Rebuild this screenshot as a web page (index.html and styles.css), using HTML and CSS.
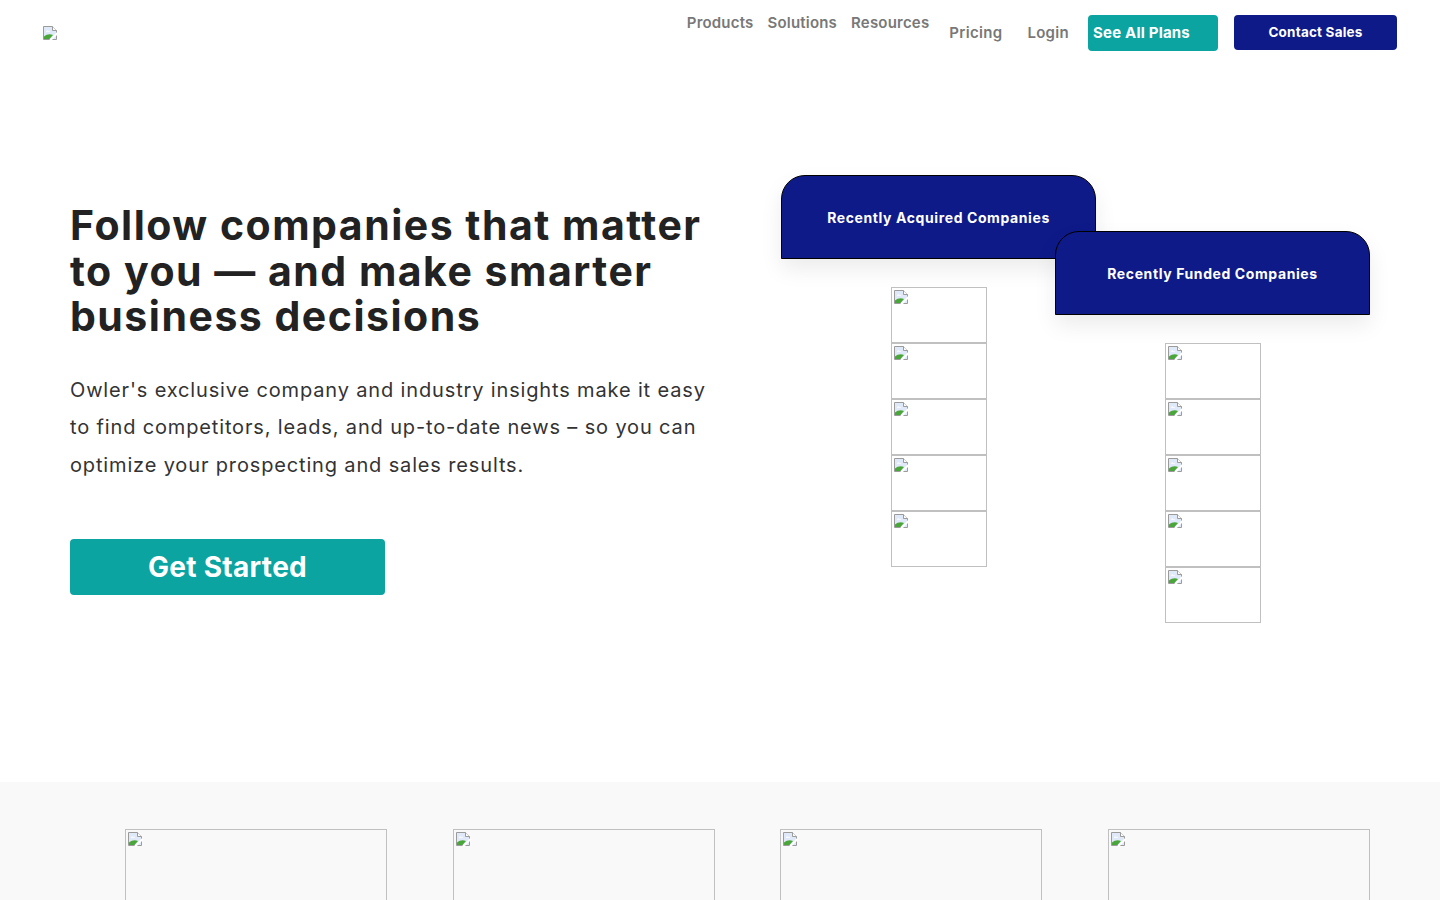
FILE: index.html
```html
<!DOCTYPE html>
<html lang="en">
<head>
    <meta charset="UTF-8">
    <meta name="viewport" content="width=device-width, initial-scale=1.0">
    <title>Owler</title>
    <link rel="stylesheet" href="styles.css">
</head>
<body>
    <!-- placeholder glyph used wherever a logo image has not loaded -->
    <svg class="defs" width="0" height="0">
      <symbol id="noimg" viewBox="0 0 16 16">
        <path d="M1.5 1.5h9l4 4v9h-13z" fill="#dfe9f7" stroke="#9b9b9b" />
        <path d="M10.5 1.5v4h4" fill="#ffffff" stroke="#9b9b9b" />
        <path d="M4 6.5c0-1 1.5-1.5 2.2-.6.6-.5 1.8-.2 1.8.8H4z" fill="#ffffff" />
        <path d="M2 14V11.5c3-2.5 6-2.8 9-1.5L7.5 14z" fill="#4aa63a" />
        <path d="M8 15.5L15.5 8" stroke="#ffffff" stroke-width="2" />
      </symbol>
    </svg>

    <header class="topbar">
      <a class="logo" href="#"><svg class="noimg"><use href="#noimg" /></svg></a>
      <nav class="menu">
        <a class="menu-drop" href="#">Products</a>
        <a class="menu-drop" href="#">Solutions</a>
        <a class="menu-drop" href="#">Resources</a>
        <a class="menu-link" href="#">Pricing</a>
        <a class="menu-link" href="#">Login</a>
        <a class="btn-plans" href="#">See All Plans</a>
        <a class="btn-sales" href="#">Contact Sales</a>
      </nav>
    </header>

    <section class="hero">
      <div class="hero-text">
        <h1>Follow companies that matter to you — and make smarter business decisions</h1>
        <p>Owler's exclusive company and industry insights make it easy to find competitors, leads, and up-to-date news – so you can optimize your prospecting and sales results.</p>
        <a class="btn-start" href="#">Get Started</a>
      </div>

      <div class="lists">
        <div class="list">
          <div class="list-head">Recently Acquired Companies</div>
          <div class="logos">
            <div class="logo-box"><svg class="noimg"><use href="#noimg" /></svg></div>
            <div class="logo-box"><svg class="noimg"><use href="#noimg" /></svg></div>
            <div class="logo-box"><svg class="noimg"><use href="#noimg" /></svg></div>
            <div class="logo-box"><svg class="noimg"><use href="#noimg" /></svg></div>
            <div class="logo-box"><svg class="noimg"><use href="#noimg" /></svg></div>
          </div>
        </div>
        <div class="list list-funded">
          <div class="list-head">Recently Funded Companies</div>
          <div class="logos">
            <div class="logo-box"><svg class="noimg"><use href="#noimg" /></svg></div>
            <div class="logo-box"><svg class="noimg"><use href="#noimg" /></svg></div>
            <div class="logo-box"><svg class="noimg"><use href="#noimg" /></svg></div>
            <div class="logo-box"><svg class="noimg"><use href="#noimg" /></svg></div>
            <div class="logo-box"><svg class="noimg"><use href="#noimg" /></svg></div>
          </div>
        </div>
      </div>
    </section>

    <section class="partners">
      <div class="partner-box"><svg class="noimg"><use href="#noimg" /></svg></div>
      <div class="partner-box"><svg class="noimg"><use href="#noimg" /></svg></div>
      <div class="partner-box"><svg class="noimg"><use href="#noimg" /></svg></div>
      <div class="partner-box"><svg class="noimg"><use href="#noimg" /></svg></div>
    </section>
</body>
</html>
```

FILE: styles.css
```css
* {
  margin: 0px;
  padding: 0px;
  box-sizing: border-box;
}

body {
  font-family: Inter, "Open Sans", sans-serif;
  color: #222222;
  background-color: #ffffff;
}

a {
  text-decoration: none;
}

.defs {
  position: absolute;
}

.noimg {
  display: block;
  width: 16px;
  height: 16px;
}

/* top navigation */
.topbar {
  height: 66px;
  padding: 15px 43px 0 43px;
  display: flex;
  justify-content: space-between;
  align-items: flex-start;
}

.logo {
  margin-top: 10px;
  margin-left: -1px;
}

.menu {
  display: flex;
  align-items: flex-start;
}

.menu-drop {
  font-size: 15px;
  font-weight: 600;
  line-height: 16px;
  letter-spacing: 0.2px;
  color: #787878;
  margin-right: 14px;
}

.menu-drop:nth-child(3) {
  margin-right: 20px;
}

.menu-link {
  font-size: 15px;
  font-weight: 600;
  line-height: 35px;
  letter-spacing: 0.3px;
  color: #787878;
  margin-right: 25px;
}

.menu-link:nth-child(5) {
  margin-right: 19px;
}

.btn-plans {
  width: 130px;
  height: 36px;
  padding-left: 5px;
  line-height: 35px;
  font-size: 15px;
  font-weight: 700;
  letter-spacing: 0.2px;
  color: #ffffff;
  background-color: #0ba4a0;
  border-radius: 4px;
  margin-right: 16px;
}

.btn-sales {
  width: 163px;
  height: 35px;
  line-height: 35px;
  text-align: center;
  font-size: 13.5px;
  font-weight: 700;
  letter-spacing: 0.2px;
  color: #ffffff;
  background-color: #0d1a87;
  border-radius: 4px;
}

/* hero */
.hero {
  height: 716px;
  padding: 0 70px;
  display: flex;
  justify-content: space-between;
  align-items: flex-start;
}

.hero-text {
  width: 660px;
  padding-top: 137px;
  display: flex;
  flex-direction: column;
  align-items: flex-start;
}

.hero-text h1 {
  max-width: 645px;
  font-size: 41px;
  line-height: 45.5px;
  font-weight: 700;
  letter-spacing: 1.5px;
  color: #222222;
}

.hero-text p {
  max-width: 650px;
  margin-top: 32px;
  font-size: 20px;
  line-height: 37.5px;
  letter-spacing: 0.85px;
  color: #333333;
}

.btn-start {
  margin-top: 55px;
  width: 315px;
  height: 56px;
  line-height: 56px;
  text-align: center;
  font-size: 28px;
  font-weight: 700;
  letter-spacing: 0.3px;
  color: #ffffff;
  background-color: #0ba4a0;
  border-radius: 4px;
}

.lists {
  margin-top: 109px;
  display: flex;
  align-items: flex-start;
}

.list {
  width: 315px;
}

.list-funded {
  margin-left: -41px;
  margin-top: 56px;
}

.list-head {
  height: 84px;
  display: flex;
  align-items: center;
  justify-content: center;
  font-size: 14px;
  font-weight: 700;
  letter-spacing: 0.6px;
  color: #ffffff;
  background-color: #0e1a88;
  border: 1px solid #000000;
  border-radius: 24px 24px 0 0;
  box-shadow: 0 10px 22px rgba(0, 0, 0, 0.08);
}

.logos {
  margin-top: 28px;
  display: flex;
  flex-direction: column;
  align-items: center;
}

.logo-box {
  width: 96px;
  height: 56px;
  border: 1px solid #c0c0c0;
  padding: 1px;
}

/* partner strip */
.partners {
  background-color: #f9f9f9;
  padding: 47px 70px 60px 125px;
  display: flex;
  justify-content: space-between;
}

.partner-box {
  width: 262px;
  height: 140px;
  border: 1px solid #c0c0c0;
  padding: 1px;
}
```
